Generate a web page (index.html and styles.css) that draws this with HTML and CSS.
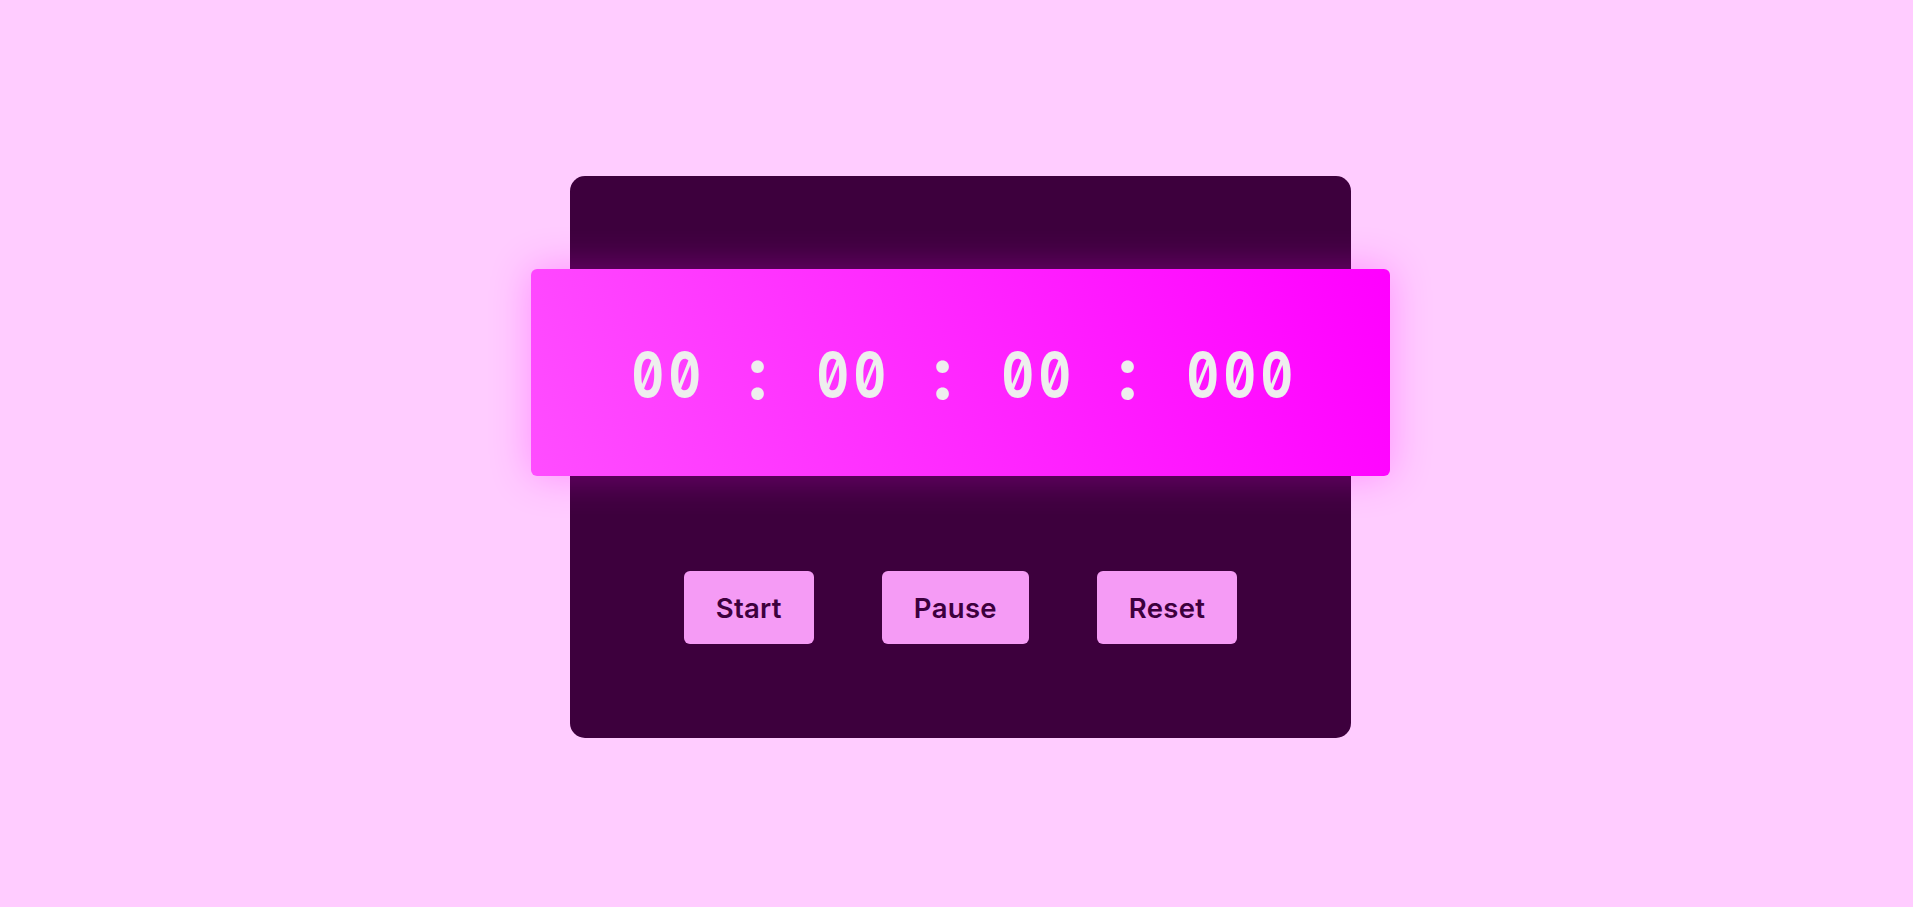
FILE: index.html
```html
<!DOCTYPE html>
<html lang="en">
<head>
<meta charset="utf-8">
<title>Stopwatch</title>
<link rel="stylesheet" href="styles.css">
</head>
<body>
<div class="page">
  <div class="card">
    <div class="display">
      <div class="time">
        <span class="seg"><span class="ch">0</span><span class="ch">0</span></span>
        <span class="ch sep">:</span>
        <span class="seg"><span class="ch">0</span><span class="ch">0</span></span>
        <span class="ch sep">:</span>
        <span class="seg"><span class="ch">0</span><span class="ch">0</span></span>
        <span class="ch sep">:</span>
        <span class="seg"><span class="ch">0</span><span class="ch">0</span><span class="ch">0</span></span>
      </div>
    </div>
    <div class="controls">
      <button class="btn">Start</button>
      <button class="btn">Pause</button>
      <button class="btn">Reset</button>
    </div>
  </div>
</div>
</body>
</html>
```
FILE: styles.css
```css
* { box-sizing: border-box; }
html, body { margin: 0; padding: 0; }
body {
  background: #ffccff;
}
.page {
  height: 907px;
  padding: 7px 0 0 8px;
  display: flex;
  align-items: center;
  justify-content: center;
}
.card {
  width: 781px;
  height: 562px;
  background: #3d003d;
  border-radius: 15px;
  padding-top: 93px;
  display: flex;
  flex-direction: column;
  align-items: center;
}
.display {
  width: 859px;
  height: 207px;
  margin: 0 -39px;
  border-radius: 6px;
  background: linear-gradient(70deg, #ff4dff 0%, #ff00ff 100%);
  box-shadow: 0 0 40px rgba(255, 0, 255, 0.3);
  display: flex;
  align-items: center;
  justify-content: center;
}
.time {
  display: flex;
  gap: 37px;
  font-family: "Inter", sans-serif;
  font-weight: 700;
  font-size: 62px;
  line-height: 1;
  color: #eeeeee;
  font-variant-numeric: tabular-nums slashed-zero;
  font-feature-settings: "tnum" 1, "zero" 1;
  margin-top: 4px;
}
.seg {
  display: flex;
}
.ch {
  display: block;
  width: 37px;
  text-align: center;
}
.seg .ch {
  transform: scaleX(0.8);
}
.sep {
  transform: translateY(-2px) scale(1.2);
}
.controls {
  margin-top: 95px;
  display: flex;
  gap: 68px;
}
.btn {
  height: 73px;
  padding: 0 32px;
  border: none;
  border-radius: 6px;
  background: #f59bf5;
  color: #3d003d;
  font-family: "Inter", sans-serif;
  font-weight: 600;
  font-size: 27.5px;
  letter-spacing: 0.3px;
}
```
